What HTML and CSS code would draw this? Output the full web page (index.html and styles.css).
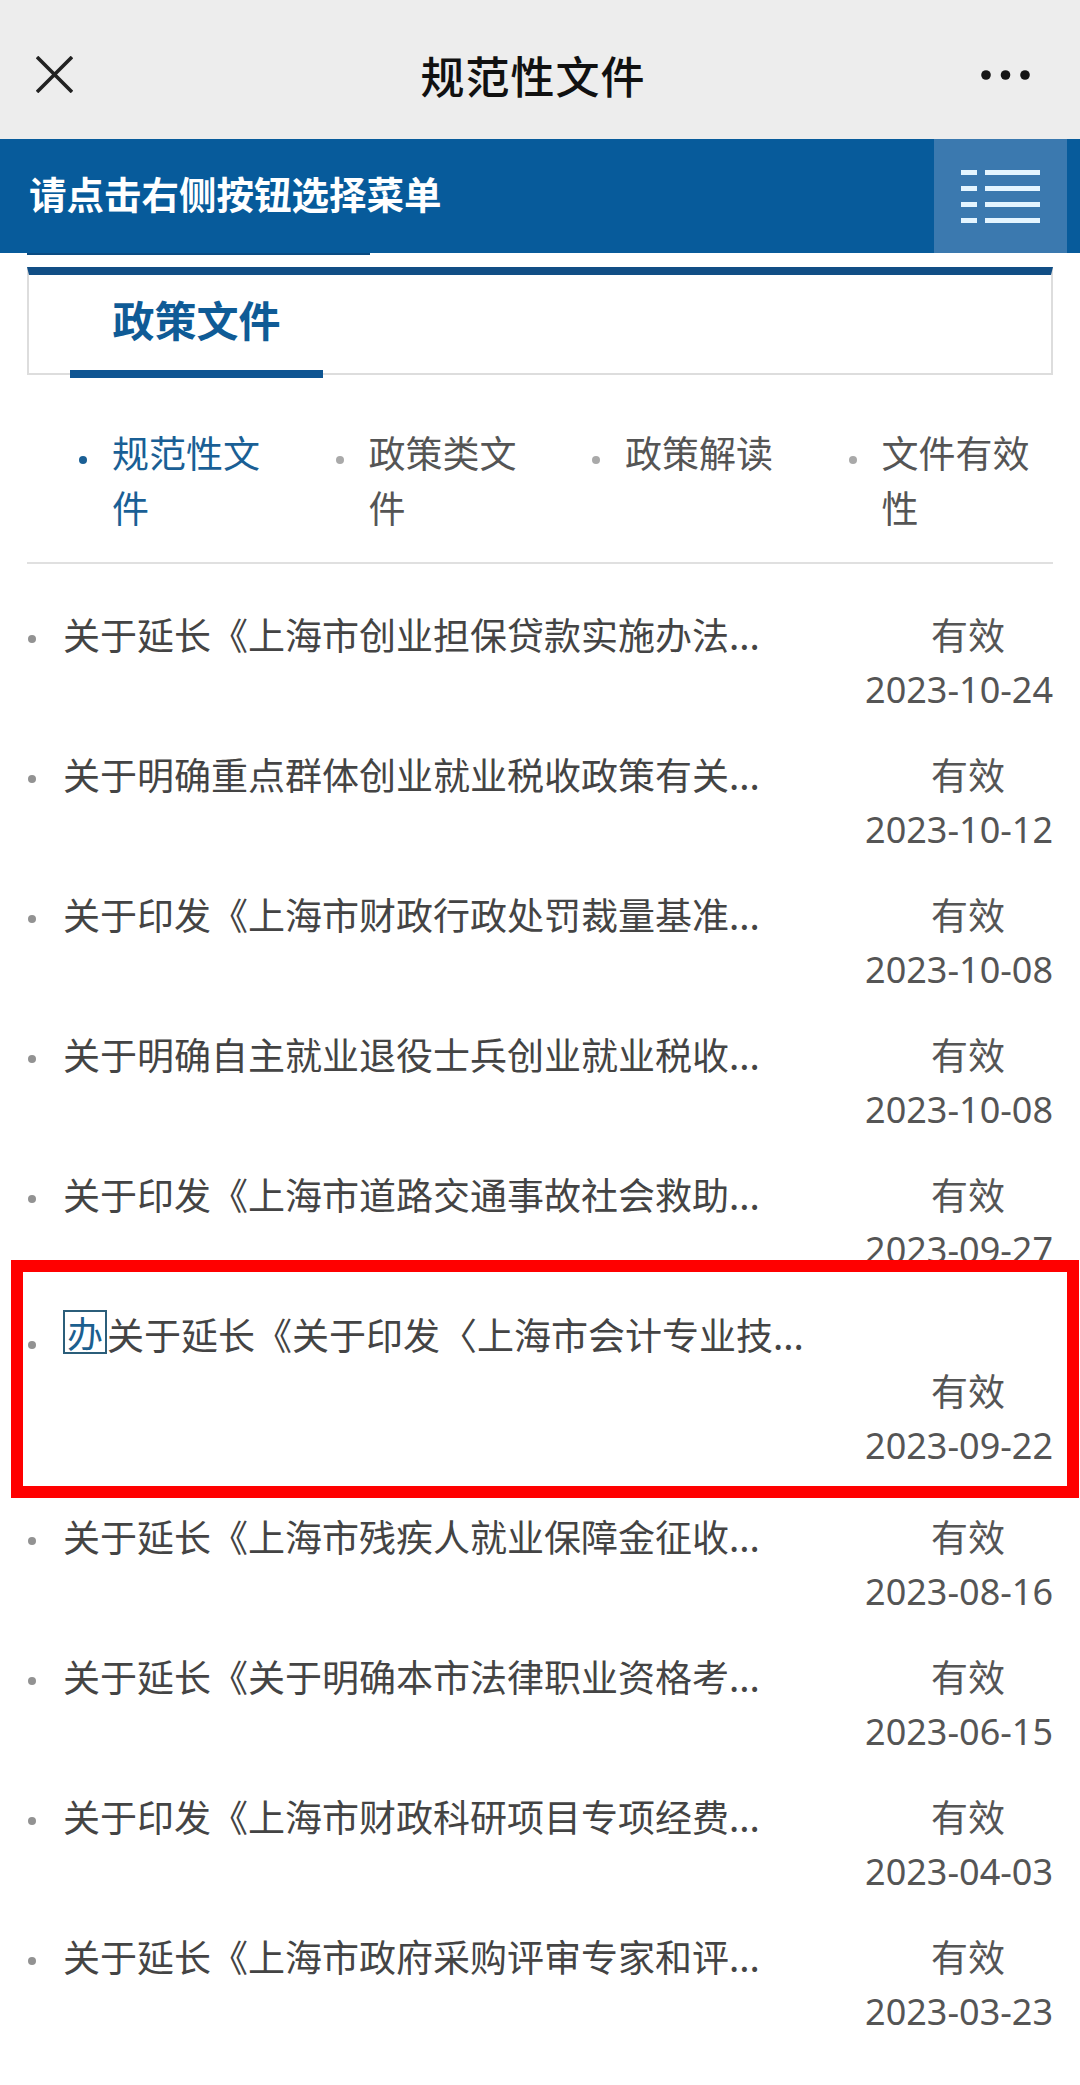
FILE: index.html
```html
<!DOCTYPE html>
<html lang="zh-CN">
<head>
<meta charset="utf-8">
<title>规范性文件</title>
<link rel="stylesheet" href="styles.css">
</head>
<body>
<header class="topbar">
  <svg class="close-icon" width="37" height="37" viewBox="0 0 37 37" aria-hidden="true">
    <path d="M1 1 L36 36 M36 1 L1 36" stroke="#222" stroke-width="3.6" fill="none"/>
  </svg>
  <h1 class="topbar-title">规范性文件</h1>
  <svg class="more-icon" width="49" height="10" viewBox="0 0 49 10" aria-hidden="true">
    <circle cx="5" cy="5" r="4.8" fill="#151515"/>
    <circle cx="24.5" cy="5" r="4.8" fill="#151515"/>
    <circle cx="44" cy="5" r="4.8" fill="#151515"/>
  </svg>
</header>

<div class="menubar">
  <div class="menubar-text">请点击右侧按钮选择菜单</div>
  <div class="menubar-btn">
    <svg width="79" height="53" viewBox="0 0 79 53" aria-hidden="true">
      <rect x="0" y="0" width="16" height="5" fill="#e4f5ff"/>
      <rect x="24" y="0" width="55" height="5" fill="#e4f5ff"/>
      <rect x="0" y="16" width="16" height="5" fill="#e4f5ff"/>
      <rect x="24" y="16" width="55" height="5" fill="#e4f5ff"/>
      <rect x="0" y="32" width="16" height="5" fill="#e4f5ff"/>
      <rect x="24" y="32" width="55" height="5" fill="#e4f5ff"/>
      <rect x="0" y="48" width="16" height="5" fill="#e4f5ff"/>
      <rect x="24" y="48" width="55" height="5" fill="#e4f5ff"/>
    </svg>
  </div>
</div>
<div class="menubar-edge"></div>

<section class="tabbox">
  <div class="tab tab-active">政策文件</div>
</section>

<ul class="subnav">
  <li class="subnav-item subnav-item-active">规范性文件</li>
  <li class="subnav-item">政策类文件</li>
  <li class="subnav-item">政策解读</li>
  <li class="subnav-item">文件有效性</li>
</ul>

<div class="divider"></div>

<ul class="doclist">
  <li class="doc">
    <span class="doc-dot"></span>
    <span class="doc-title">关于延长《上海市创业担保贷款实施办法...</span>
    <span class="doc-meta"><span class="doc-status">有效</span><span class="doc-date">2023-10-24</span></span>
  </li>
  <li class="doc">
    <span class="doc-dot"></span>
    <span class="doc-title">关于明确重点群体创业就业税收政策有关...</span>
    <span class="doc-meta"><span class="doc-status">有效</span><span class="doc-date">2023-10-12</span></span>
  </li>
  <li class="doc">
    <span class="doc-dot"></span>
    <span class="doc-title">关于印发《上海市财政行政处罚裁量基准...</span>
    <span class="doc-meta"><span class="doc-status">有效</span><span class="doc-date">2023-10-08</span></span>
  </li>
  <li class="doc">
    <span class="doc-dot"></span>
    <span class="doc-title">关于明确自主就业退役士兵创业就业税收...</span>
    <span class="doc-meta"><span class="doc-status">有效</span><span class="doc-date">2023-10-08</span></span>
  </li>
  <li class="doc">
    <span class="doc-dot"></span>
    <span class="doc-title">关于印发《上海市道路交通事故社会救助...</span>
    <span class="doc-meta"><span class="doc-status">有效</span><span class="doc-date">2023-09-27</span></span>
  </li>
  <li class="doc doc-highlight">
    <span class="doc-dot doc-dot-low"></span>
    <span class="doc-title doc-title-wide"><span class="doc-tag">办</span>关于延长《关于印发〈上海市会计专业技...</span>
    <span class="doc-meta doc-meta-wrap"><span class="doc-status">有效</span><span class="doc-date">2023-09-22</span></span>
  </li>
  <li class="doc">
    <span class="doc-dot"></span>
    <span class="doc-title">关于延长《上海市残疾人就业保障金征收...</span>
    <span class="doc-meta"><span class="doc-status">有效</span><span class="doc-date">2023-08-16</span></span>
  </li>
  <li class="doc">
    <span class="doc-dot"></span>
    <span class="doc-title">关于延长《关于明确本市法律职业资格考...</span>
    <span class="doc-meta"><span class="doc-status">有效</span><span class="doc-date">2023-06-15</span></span>
  </li>
  <li class="doc">
    <span class="doc-dot"></span>
    <span class="doc-title">关于印发《上海市财政科研项目专项经费...</span>
    <span class="doc-meta"><span class="doc-status">有效</span><span class="doc-date">2023-04-03</span></span>
  </li>
  <li class="doc">
    <span class="doc-dot"></span>
    <span class="doc-title">关于延长《上海市政府采购评审专家和评...</span>
    <span class="doc-meta"><span class="doc-status">有效</span><span class="doc-date">2023-03-23</span></span>
  </li>
</ul>
</body>
</html>
```
FILE: styles.css
```css
* {
  box-sizing: border-box;
}

html, body {
  margin: 0;
  padding: 0;
  background: #ffffff;
}

body {
  width: 1080px;
  font-family: "Noto Sans CJK SC", "Noto Sans", sans-serif;
  color: #444;
}

/* ---------- top bar ---------- */
.topbar {
  height: 139px;
  padding-top: 10px;
  background: #ededed;
  display: grid;
  grid-template-columns: 1fr auto 1fr;
  align-items: center;
}

.close-icon {
  margin-left: 36px;
  display: block;
}

.topbar-title {
  margin: 0 14px 0 0;
  font-size: 44px;
  font-weight: 500;
  color: #111;
  line-height: 1;
  letter-spacing: 1px;
}

.more-icon {
  justify-self: end;
  margin-right: 50px;
  display: block;
}

/* ---------- blue menu bar ---------- */
.menubar {
  height: 114px;
  background: #075b9b;
  display: flex;
}

.menubar-text {
  flex: 1;
  display: flex;
  align-items: center;
  padding: 0 0 7px 29px;
  color: #ffffff;
  font-size: 37.5px;
  font-weight: 700;
}

.menubar-btn {
  width: 133px;
  margin-right: 13px;
  background: #3b79af;
  display: flex;
  align-items: center;
  justify-content: center;
}

.menubar-btn svg {
  display: block;
}

.menubar-edge {
  width: 343px;
  height: 2px;
  margin-left: 27px;
  background: #0a4b82;
}

/* ---------- tab box ---------- */
.tabbox {
  margin: 12px 27px 0;
  border-top: 8px solid #114e85;
  border-left: 2px solid #dddddd;
  border-right: 2px solid #dddddd;
  border-bottom: 2px solid #dddddd;
  display: flex;
}

.tab {
  width: 253px;
  height: 103px;
  margin: 0 0 -5px 41px;
  padding-bottom: 9px;
  display: flex;
  align-items: center;
  justify-content: center;
  font-size: 42px;
  font-weight: 700;
  color: #0f5b96;
}

.tab-active {
  border-bottom: 8px solid #0f5592;
}

/* ---------- sub navigation ---------- */
.subnav {
  list-style: none;
  margin: 50px 27px 0;
  padding: 0;
  display: grid;
  grid-template-columns: repeat(4, 1fr);
}

.subnav-item {
  display: flex;
  align-items: flex-start;
  font-size: 37px;
  line-height: 55px;
  color: #555;
}

.subnav-item::before {
  content: "";
  flex: 0 0 8px;
  height: 8px;
  margin: 31px 25px 0 52px;
  border-radius: 50%;
  background: #a9a9a9;
}

.subnav-item-active {
  color: #1a5f95;
}

.subnav-item-active::before {
  background: #1a5f95;
}

.divider {
  height: 2px;
  margin: 27px 27px 0;
  background: #e0e0e0;
}

/* ---------- document list ---------- */
.doclist {
  list-style: none;
  margin: 0 27px;
  padding: 28px 0 0;
}

.doc {
  position: relative;
  display: flex;
  flex-wrap: wrap;
  align-items: flex-start;
  padding: 14px 0 14px;
  font-size: 37px;
  line-height: 56px;
  color: #444;
}

.doc-dot {
  flex: 0 0 8px;
  height: 8px;
  margin: 29px 27px 0 1px;
  border-radius: 50%;
  background: #929292;
}

.doc-dot-low {
  margin-top: 35px;
}

.doc-title {
  white-space: nowrap;
}

.doc-title-wide {
  flex: 1 1 0;
}

.doc-tag {
  display: inline-block;
  width: 44px;
  height: 44px;
  margin-top: 4px;
  vertical-align: top;
  border: 2px solid #2b5e7a;
  color: #1b5f8f;
  font-size: 36px;
  line-height: 40px;
  text-align: center;
}

.doc-meta {
  margin-left: auto;
  display: flex;
  flex-direction: column;
  align-items: flex-end;
  color: #555;
}

.doc-meta-wrap {
  flex: 0 0 100%;
}

.doc-status {
  padding-right: 48px;
}

.doc-date {
  font-family: "Noto Sans", sans-serif;
  font-size: 36px;
}

/* highlighted row with red annotation frame */
.doc-highlight {
  padding-bottom: 20px;
}

.doc-highlight::after {
  content: "";
  position: absolute;
  top: -32px;
  bottom: -4px;
  left: -16px;
  right: -26px;
  border: 12px solid #ff0000;
  pointer-events: none;
}
```
